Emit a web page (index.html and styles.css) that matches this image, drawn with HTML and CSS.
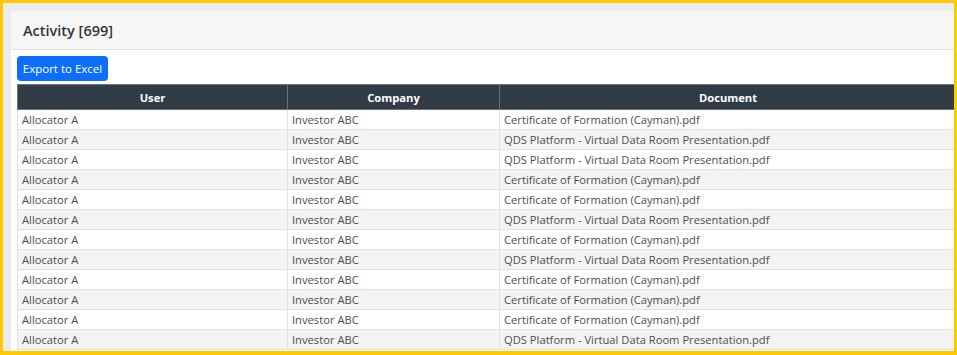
FILE: index.html
```html
<!DOCTYPE html>
<html lang="en">
<head>
    <meta charset="UTF-8">
    <title>Activity</title>
    <link rel="stylesheet" href="styles.css">
</head>
<body>
    <div class="frame">
        <div class="card">
            <div class="card-header">
                <h2>Activity [699]</h2>
            </div>
            <div class="card-body">
                <button class="btn-export">Export to Excel</button>
                <table class="activity-table">
                    <thead>
                        <tr>
                            <th class="col-user">User</th>
                            <th class="col-company">Company</th>
                            <th>Document</th>
                        </tr>
                    </thead>
                    <tbody>
                        <tr><td>Allocator A</td><td>Investor ABC</td><td>Certificate of Formation (Cayman).pdf</td></tr>
                        <tr><td>Allocator A</td><td>Investor ABC</td><td>QDS Platform - Virtual Data Room Presentation.pdf</td></tr>
                        <tr><td>Allocator A</td><td>Investor ABC</td><td>QDS Platform - Virtual Data Room Presentation.pdf</td></tr>
                        <tr><td>Allocator A</td><td>Investor ABC</td><td>Certificate of Formation (Cayman).pdf</td></tr>
                        <tr><td>Allocator A</td><td>Investor ABC</td><td>Certificate of Formation (Cayman).pdf</td></tr>
                        <tr><td>Allocator A</td><td>Investor ABC</td><td>QDS Platform - Virtual Data Room Presentation.pdf</td></tr>
                        <tr><td>Allocator A</td><td>Investor ABC</td><td>Certificate of Formation (Cayman).pdf</td></tr>
                        <tr><td>Allocator A</td><td>Investor ABC</td><td>QDS Platform - Virtual Data Room Presentation.pdf</td></tr>
                        <tr><td>Allocator A</td><td>Investor ABC</td><td>Certificate of Formation (Cayman).pdf</td></tr>
                        <tr><td>Allocator A</td><td>Investor ABC</td><td>Certificate of Formation (Cayman).pdf</td></tr>
                        <tr><td>Allocator A</td><td>Investor ABC</td><td>Certificate of Formation (Cayman).pdf</td></tr>
                        <tr><td>Allocator A</td><td>Investor ABC</td><td>QDS Platform - Virtual Data Room Presentation.pdf</td></tr>
                    </tbody>
                </table>
            </div>
        </div>
    </div>
</body>
</html>
```

FILE: styles.css
```css
body {
    margin: 0;
    font-family: 'Open Sans', 'Liberation Sans', sans-serif;
}
.frame {
    width: 957px;
    height: 355px;
    box-sizing: border-box;
    border: 3px solid #ffc800;
    border-bottom-width: 4px;
    background: #e9ebef;
    padding: 8px 0 0 8px;
    overflow: hidden;
}
.card {
    width: 980px;
    height: 400px;
    background: #fff;
    border-radius: 4px;
}
.card-header {
    height: 39px;
    box-sizing: border-box;
    padding: 0 12px;
    display: flex;
    align-items: center;
    background: #f6f6f7;
    border-bottom: 1px solid #e2e3e5;
    border-radius: 4px 4px 0 0;
}
.card-header h2 {
    margin: 0;
    font-size: 14.5px;
    font-weight: 600;
    color: #2f3337;
}
.card-body {
    padding: 6px 6px 0 6px;
}
.btn-export {
    display: block;
    width: 91px;
    height: 25px;
    padding: 0;
    margin-bottom: 3px;
    border: none;
    border-radius: 4px;
    background: #0d6efd;
    color: #fff;
    font-family: inherit;
    font-size: 11.5px;
}
.activity-table {
    width: 940px;
    border-collapse: collapse;
    table-layout: fixed;
    font-size: 11.2px;
}
.activity-table th {
    height: 25px;
    box-sizing: border-box;
    padding: 0 4px;
    background: #313c46;
    color: #fff;
    font-weight: 700;
    text-align: center;
    border: 1px solid #6c757d;
}
.col-user {
    width: 270px;
}
.col-company {
    width: 212px;
}
.activity-table td {
    height: 20px;
    box-sizing: border-box;
    padding: 0 4px;
    color: #4d4d4d;
    border: 1px solid #dee2e6;
    white-space: nowrap;
}
.activity-table tbody tr:nth-child(even) td {
    background: #f4f4f4;
}
```
